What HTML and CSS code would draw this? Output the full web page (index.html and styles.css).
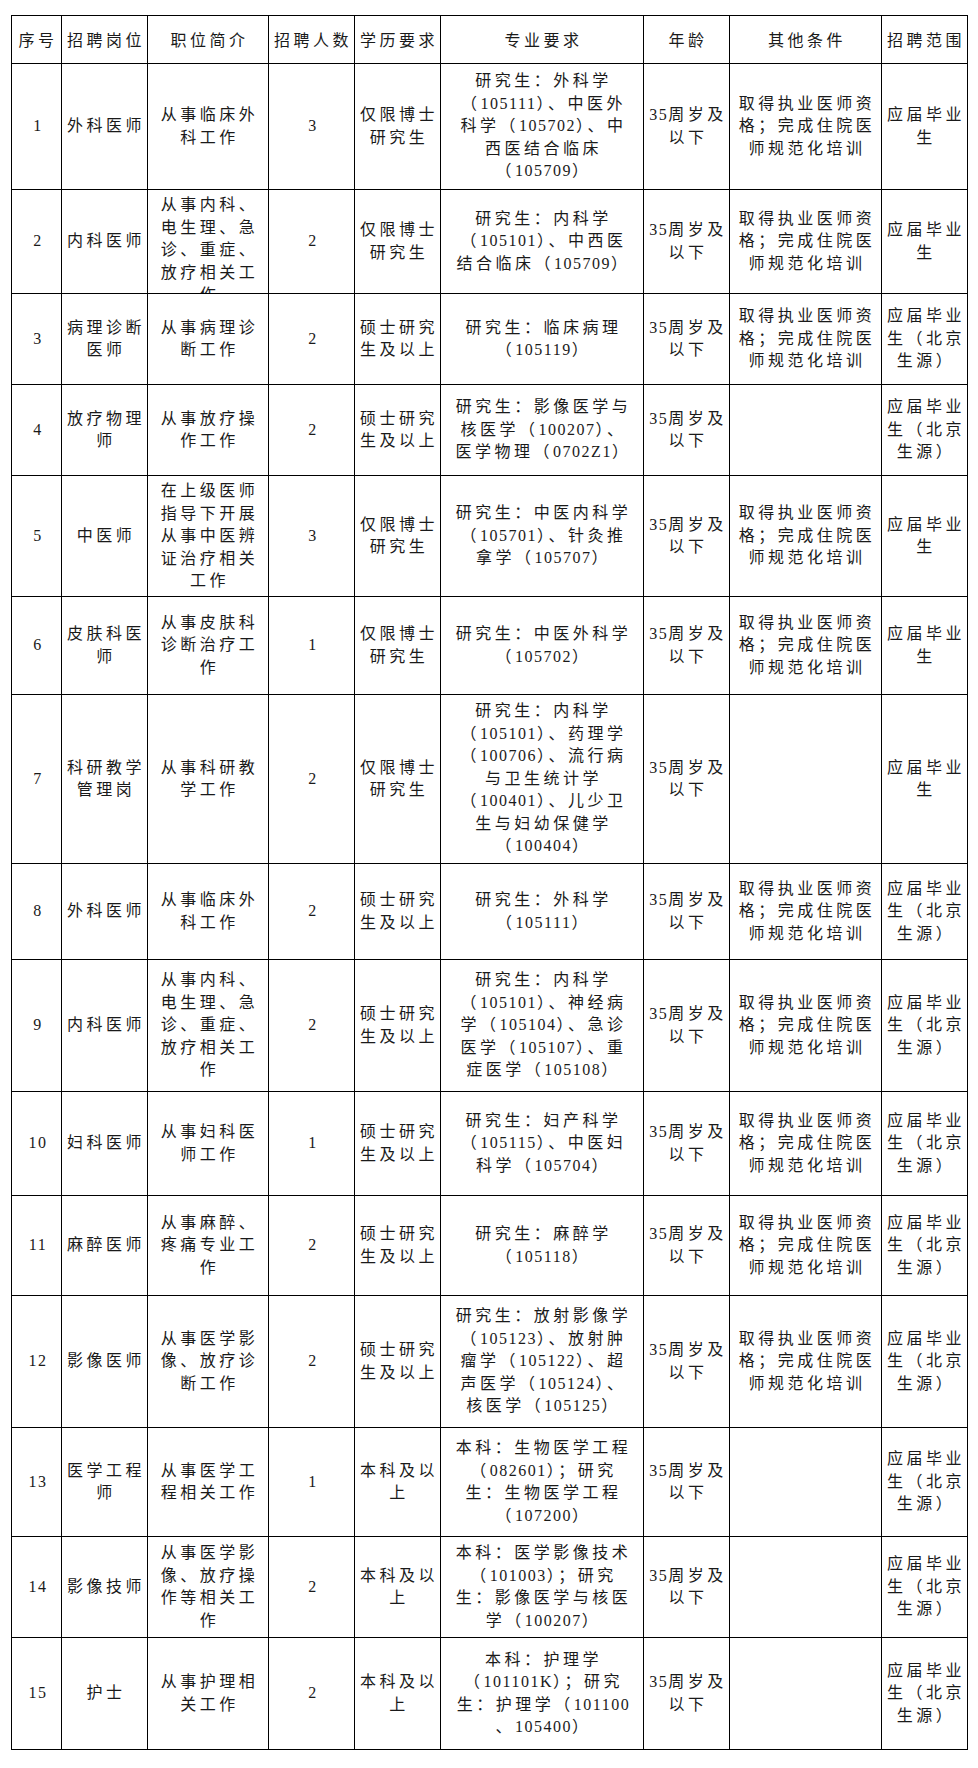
FILE: index.html
```html
<!DOCTYPE html>
<html lang="zh-CN">
<head>
<meta charset="utf-8">
<title>招聘岗位表</title>
<link rel="stylesheet" href="styles.css">
</head>
<body>
<div class="tbl">
  <div class="c h"><span>序号</span></div>
  <div class="c h"><span>招聘岗位</span></div>
  <div class="c h"><span>职位简介</span></div>
  <div class="c h"><span>招聘人数</span></div>
  <div class="c h"><span>学历要求</span></div>
  <div class="c h"><span>专业要求</span></div>
  <div class="c h"><span>年龄</span></div>
  <div class="c h"><span>其他条件</span></div>
  <div class="c h"><span>招聘范围</span></div>

  <div class="c"><span class="n">1</span></div>
  <div class="c"><span>外科医师</span></div>
  <div class="c"><span>从事临床外<br>科工作</span></div>
  <div class="c"><span class="n">3</span></div>
  <div class="c"><span>仅限博士<br>研究生</span></div>
  <div class="c"><span>研究生：外科学<br>（<i class="n">105111</i>）、中医外<br>科学（<i class="n">105702</i>）、中<br>西医结合临床<br>（<i class="n">105709</i>）</span></div>
  <div class="c"><span><i class="n">35</i>周岁及<br>以下</span></div>
  <div class="c"><span>取得执业医师资<br>格；完成住院医<br>师规范化培训</span></div>
  <div class="c"><span>应届毕业<br>生</span></div>

  <div class="c"><span class="n">2</span></div>
  <div class="c"><span>内科医师</span></div>
  <div class="c"><span>从事内科、<br>电生理、急<br>诊、重症、<br>放疗相关工<br>作</span></div>
  <div class="c"><span class="n">2</span></div>
  <div class="c"><span>仅限博士<br>研究生</span></div>
  <div class="c"><span>研究生：内科学<br>（<i class="n">105101</i>）、中西医<br>结合临床（<i class="n">105709</i>）</span></div>
  <div class="c"><span><i class="n">35</i>周岁及<br>以下</span></div>
  <div class="c"><span>取得执业医师资<br>格；完成住院医<br>师规范化培训</span></div>
  <div class="c"><span>应届毕业<br>生</span></div>

  <div class="c"><span class="n">3</span></div>
  <div class="c"><span>病理诊断<br>医师</span></div>
  <div class="c"><span>从事病理诊<br>断工作</span></div>
  <div class="c"><span class="n">2</span></div>
  <div class="c"><span>硕士研究<br>生及以上</span></div>
  <div class="c"><span>研究生：临床病理<br>（<i class="n">105119</i>）</span></div>
  <div class="c"><span><i class="n">35</i>周岁及<br>以下</span></div>
  <div class="c"><span>取得执业医师资<br>格；完成住院医<br>师规范化培训</span></div>
  <div class="c"><span>应届毕业<br>生（北京<br>生源）</span></div>

  <div class="c"><span class="n">4</span></div>
  <div class="c"><span>放疗物理<br>师</span></div>
  <div class="c"><span>从事放疗操<br>作工作</span></div>
  <div class="c"><span class="n">2</span></div>
  <div class="c"><span>硕士研究<br>生及以上</span></div>
  <div class="c"><span>研究生：影像医学与<br>核医学（<i class="n">100207</i>）、<br>医学物理（<i class="n">0702Z1</i>）</span></div>
  <div class="c"><span><i class="n">35</i>周岁及<br>以下</span></div>
  <div class="c"><span></span></div>
  <div class="c"><span>应届毕业<br>生（北京<br>生源）</span></div>

  <div class="c"><span class="n">5</span></div>
  <div class="c"><span>中医师</span></div>
  <div class="c"><span>在上级医师<br>指导下开展<br>从事中医辨<br>证治疗相关<br>工作</span></div>
  <div class="c"><span class="n">3</span></div>
  <div class="c"><span>仅限博士<br>研究生</span></div>
  <div class="c"><span>研究生：中医内科学<br>（<i class="n">105701</i>）、针灸推<br>拿学（<i class="n">105707</i>）</span></div>
  <div class="c"><span><i class="n">35</i>周岁及<br>以下</span></div>
  <div class="c"><span>取得执业医师资<br>格；完成住院医<br>师规范化培训</span></div>
  <div class="c"><span>应届毕业<br>生</span></div>

  <div class="c"><span class="n">6</span></div>
  <div class="c"><span>皮肤科医<br>师</span></div>
  <div class="c"><span>从事皮肤科<br>诊断治疗工<br>作</span></div>
  <div class="c"><span class="n">1</span></div>
  <div class="c"><span>仅限博士<br>研究生</span></div>
  <div class="c"><span>研究生：中医外科学<br>（<i class="n">105702</i>）</span></div>
  <div class="c"><span><i class="n">35</i>周岁及<br>以下</span></div>
  <div class="c"><span>取得执业医师资<br>格；完成住院医<br>师规范化培训</span></div>
  <div class="c"><span>应届毕业<br>生</span></div>

  <div class="c"><span class="n">7</span></div>
  <div class="c"><span>科研教学<br>管理岗</span></div>
  <div class="c"><span>从事科研教<br>学工作</span></div>
  <div class="c"><span class="n">2</span></div>
  <div class="c"><span>仅限博士<br>研究生</span></div>
  <div class="c"><span>研究生：内科学<br>（<i class="n">105101</i>）、药理学<br>（<i class="n">100706</i>）、流行病<br>与卫生统计学<br>（<i class="n">100401</i>）、儿少卫<br>生与妇幼保健学<br>（<i class="n">100404</i>）</span></div>
  <div class="c"><span><i class="n">35</i>周岁及<br>以下</span></div>
  <div class="c"><span></span></div>
  <div class="c"><span>应届毕业<br>生</span></div>

  <div class="c"><span class="n">8</span></div>
  <div class="c"><span>外科医师</span></div>
  <div class="c"><span>从事临床外<br>科工作</span></div>
  <div class="c"><span class="n">2</span></div>
  <div class="c"><span>硕士研究<br>生及以上</span></div>
  <div class="c"><span>研究生：外科学<br>（<i class="n">105111</i>）</span></div>
  <div class="c"><span><i class="n">35</i>周岁及<br>以下</span></div>
  <div class="c"><span>取得执业医师资<br>格；完成住院医<br>师规范化培训</span></div>
  <div class="c"><span>应届毕业<br>生（北京<br>生源）</span></div>

  <div class="c"><span class="n">9</span></div>
  <div class="c"><span>内科医师</span></div>
  <div class="c"><span>从事内科、<br>电生理、急<br>诊、重症、<br>放疗相关工<br>作</span></div>
  <div class="c"><span class="n">2</span></div>
  <div class="c"><span>硕士研究<br>生及以上</span></div>
  <div class="c"><span>研究生：内科学<br>（<i class="n">105101</i>）、神经病<br>学（<i class="n">105104</i>）、急诊<br>医学（<i class="n">105107</i>）、重<br>症医学（<i class="n">105108</i>）</span></div>
  <div class="c"><span><i class="n">35</i>周岁及<br>以下</span></div>
  <div class="c"><span>取得执业医师资<br>格；完成住院医<br>师规范化培训</span></div>
  <div class="c"><span>应届毕业<br>生（北京<br>生源）</span></div>

  <div class="c"><span class="n">10</span></div>
  <div class="c"><span>妇科医师</span></div>
  <div class="c"><span>从事妇科医<br>师工作</span></div>
  <div class="c"><span class="n">1</span></div>
  <div class="c"><span>硕士研究<br>生及以上</span></div>
  <div class="c"><span>研究生：妇产科学<br>（<i class="n">105115</i>）、中医妇<br>科学（<i class="n">105704</i>）</span></div>
  <div class="c"><span><i class="n">35</i>周岁及<br>以下</span></div>
  <div class="c"><span>取得执业医师资<br>格；完成住院医<br>师规范化培训</span></div>
  <div class="c"><span>应届毕业<br>生（北京<br>生源）</span></div>

  <div class="c"><span class="n">11</span></div>
  <div class="c"><span>麻醉医师</span></div>
  <div class="c"><span>从事麻醉、<br>疼痛专业工<br>作</span></div>
  <div class="c"><span class="n">2</span></div>
  <div class="c"><span>硕士研究<br>生及以上</span></div>
  <div class="c"><span>研究生：麻醉学<br>（<i class="n">105118</i>）</span></div>
  <div class="c"><span><i class="n">35</i>周岁及<br>以下</span></div>
  <div class="c"><span>取得执业医师资<br>格；完成住院医<br>师规范化培训</span></div>
  <div class="c"><span>应届毕业<br>生（北京<br>生源）</span></div>

  <div class="c"><span class="n">12</span></div>
  <div class="c"><span>影像医师</span></div>
  <div class="c"><span>从事医学影<br>像、放疗诊<br>断工作</span></div>
  <div class="c"><span class="n">2</span></div>
  <div class="c"><span>硕士研究<br>生及以上</span></div>
  <div class="c"><span>研究生：放射影像学<br>（<i class="n">105123</i>）、放射肿<br>瘤学（<i class="n">105122</i>）、超<br>声医学（<i class="n">105124</i>）、<br>核医学（<i class="n">105125</i>）</span></div>
  <div class="c"><span><i class="n">35</i>周岁及<br>以下</span></div>
  <div class="c"><span>取得执业医师资<br>格；完成住院医<br>师规范化培训</span></div>
  <div class="c"><span>应届毕业<br>生（北京<br>生源）</span></div>

  <div class="c"><span class="n">13</span></div>
  <div class="c"><span>医学工程<br>师</span></div>
  <div class="c"><span>从事医学工<br>程相关工作</span></div>
  <div class="c"><span class="n">1</span></div>
  <div class="c"><span>本科及以<br>上</span></div>
  <div class="c"><span>本科：生物医学工程<br>（<i class="n">082601</i>）；研究<br>生：生物医学工程<br>（<i class="n">107200</i>）</span></div>
  <div class="c"><span><i class="n">35</i>周岁及<br>以下</span></div>
  <div class="c"><span></span></div>
  <div class="c"><span>应届毕业<br>生（北京<br>生源）</span></div>

  <div class="c"><span class="n">14</span></div>
  <div class="c"><span>影像技师</span></div>
  <div class="c"><span>从事医学影<br>像、放疗操<br>作等相关工<br>作</span></div>
  <div class="c"><span class="n">2</span></div>
  <div class="c"><span>本科及以<br>上</span></div>
  <div class="c"><span>本科：医学影像技术<br>（<i class="n">101003</i>）；研究<br>生：影像医学与核医<br>学（<i class="n">100207</i>）</span></div>
  <div class="c"><span><i class="n">35</i>周岁及<br>以下</span></div>
  <div class="c"><span></span></div>
  <div class="c"><span>应届毕业<br>生（北京<br>生源）</span></div>

  <div class="c"><span class="n">15</span></div>
  <div class="c"><span>护士</span></div>
  <div class="c"><span>从事护理相<br>关工作</span></div>
  <div class="c"><span class="n">2</span></div>
  <div class="c"><span>本科及以<br>上</span></div>
  <div class="c"><span>本科：护理学<br>（<i class="n">101101K</i>）；研究<br>生：护理学（<i class="n">101100</i><br>、<i class="n">105400</i>）</span></div>
  <div class="c"><span><i class="n">35</i>周岁及<br>以下</span></div>
  <div class="c"><span></span></div>
  <div class="c"><span>应届毕业<br>生（北京<br>生源）</span></div>
</div>
</body>
</html>
```

FILE: styles.css
```css
html, body {
  margin: 0;
  background: #ffffff;
}

body {
  padding: 15px 0 0 11px;
  font-family: "Liberation Serif", "Noto Sans CJK SC", serif;
  font-size: 16px;
  line-height: 22.5px;
  color: #1a1a1a;
}

.tbl {
  display: grid;
  width: max-content;
  grid-template-columns: 50px 86px 121px 86px 86px 203px 86px 152px 86px;
  grid-template-rows: 48px 126px 104px 91px 91px 121px 98px 169px 96px 132px 104px 100px 132px 109px 101px 112px;
  border-top: 1px solid #000;
  border-left: 1px solid #000;
}

.c {
  box-sizing: border-box;
  border-right: 1px solid #000;
  border-bottom: 1px solid #000;
  overflow: hidden;
  display: flex;
  flex-direction: column;
  justify-content: safe center;
  align-items: center;
  padding: 4px 0 4px 3px;
  text-align: center;
  white-space: nowrap;
  letter-spacing: 3.5px;
}

.h {
  padding-top: 7px;
}

.c i {
  font-style: normal;
}

.n {
  letter-spacing: 1.5px;
}
```
